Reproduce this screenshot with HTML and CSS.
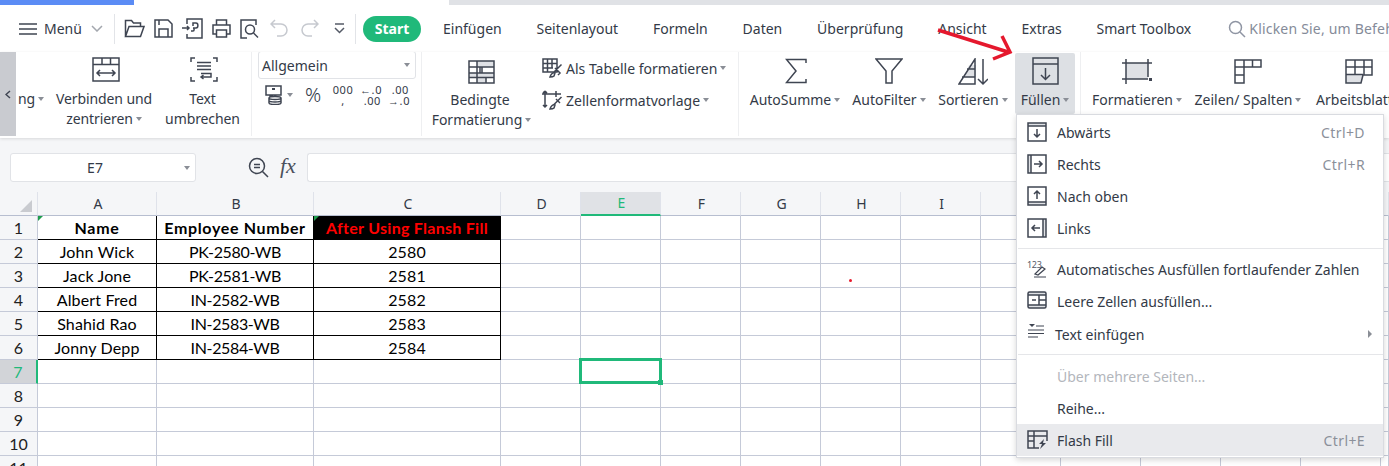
FILE: index.html
```html
<!DOCTYPE html>
<html lang="de">
<head>
<meta charset="utf-8">
<title>Füllen</title>
<link rel="stylesheet" href="styles.css">
</head>
<body>
<div class="stripe"><span class="stripe-blue"></span><span class="stripe-white"></span><span class="stripe-gray"></span></div>

<div class="tabbar">
  <svg class="i hamb" width="18" height="12" viewBox="0 0 18 12"><path d="M0 1h18M0 6h18M0 11h18"/></svg>
  <span class="menu-label">Menü</span>
  <svg class="i chev" width="12" height="7" viewBox="0 0 12 7"><path d="M1 1l5 5 5-5"/></svg>
  <span class="vsep vsep-a"></span>
  <div class="qa">
    <svg class="i" width="21" height="19" viewBox="0 0 21 19"><path d="M1.500 17.500V1.500h6l2 2.500h7v3.500M1.500 17.500h15l3.500-10H5z"/></svg>
    <svg class="i" width="19" height="19" viewBox="0 0 19 19"><path d="M1 1h13l4 4v13H1zM5 18v-8h9v8M5 1v5"/></svg>
    <svg class="i" width="21" height="21" viewBox="0 0 21 21"><path d="M5 6V1h15v19H5v-4M0 10h7M5 8l2 2-2 2M9 13h2c1.500 0 1.500-3 0-3h3c2.500 0 2.500-5 0-5h-3v3"/></svg>
    <svg class="i" width="19" height="19" viewBox="0 0 19 19"><path d="M4.500 6V1h10v5M4.500 15H1V6h17v9h-3.500M4.500 11h10v7h-10z"/></svg>
    <svg class="i" width="19" height="20" viewBox="0 0 19 20"><path d="M16 4V1H1v18h6M16 4v2"/><circle cx="10" cy="10.500" r="4.500"/><path d="M13.500 14l4.500 4.500"/></svg>
    <svg class="i off" width="18" height="19" viewBox="0 0 18 19"><path d="M5 1L1 5l4 4M1 5h10a6 6 0 0 1 0 12H7"/></svg>
    <svg class="i off" width="18" height="19" viewBox="0 0 18 19"><path d="M13 1l4 4-4 4M17 5H7a6 6 0 0 0 0 12h4"/></svg>
    <svg class="i more" width="11" height="11" viewBox="0 0 11 11"><path d="M1 1h9M1 5l4.500 4.500L10 5"/></svg>
  </div>
  <span class="vsep"></span>
  <span class="start">Start</span>
  <nav class="tabs">
    <span>Einfügen</span><span>Seitenlayout</span><span>Formeln</span><span>Daten</span><span>Überprüfung</span><span>Ansicht</span><span>Extras</span><span>Smart Toolbox</span>
  </nav>
  <div class="search">
    <svg class="i search-i" width="18" height="18" viewBox="0 0 18 18"><circle cx="7.500" cy="7.500" r="6"/><path d="M12 12l5 5"/></svg>
    <span>Klicken Sie, um Befehle zu suchen</span>
  </div>
</div>

<div class="ribbon">
  <div class="scroll-btn"><svg class="i" width="6" height="9" viewBox="0 0 6 9"><path d="M5 1L1 4.500 5 8"/></svg></div>

  <div class="group g1">
    <div class="tool t-ng"><div class="ico"></div><div class="lbl">ng<i class="caret"></i></div></div>
    <div class="tool t-verb">
      <div class="ico"><svg class="i" width="28" height="25" viewBox="0 0 28 25"><path d="M1 1h26v23H1zM1 7.500h26M10 1v6.500M18.500 1v6.500M5 16h18M8 13l-3 3 3 3M20 13l3 3-3 3"/></svg></div>
      <div class="lbl">Verbinden und</div><div class="lbl">zentrieren<i class="caret"></i></div>
    </div>
    <div class="tool t-text">
      <div class="ico"><svg class="i" width="28" height="25" viewBox="0 0 28 25"><path d="M5 1H1v4M23 1h4v4M1 20v4h4M27 20v4h-4M7 5.500h14M7 9h14M7 12.500h14M11 16.500h10v3.500H11M13.500 18l-2.500 2 2.500 2"/></svg></div>
      <div class="lbl">Text</div><div class="lbl">umbrechen</div>
    </div>
  </div>

  <div class="group g2">
    <div class="select"><span>Allgemein</span><i class="caret"></i></div>
    <div class="numrow">
      <svg class="i coins" width="19" height="20" viewBox="0 0 19 20"><path d="M1 1h15v9H1zM5 10v1h3M4 13c0-2 12-2 12 0s-12 2-12 0zM4 13v5c0 2 12 2 12 0v-5M4 15.500c0 2 12 2 12 0"/><path class="fill" d="M7 3h3v2H7z"/></svg>
      <i class="caret"></i>
      <span class="pct">%</span>
      <span class="stack s-000"><b>000</b><b>,</b></span>
      <span class="stack s-dec"><b>←.0</b><b>.00</b></span>
      <span class="stack s-inc"><b>.00</b><b>→.0</b></span>
    </div>
  </div>

  <div class="group g3">
    <div class="tool t-bed">
      <div class="ico ico-low"><svg class="i" width="27" height="24" viewBox="0 0 27 24"><path class="shade" d="M9 1h17v6H9zM14 13h12v4H14zM1 13h13v4H1zM9 17h9v6H9z"/><path d="M1 1h25v22H1zM1 7h25M1 13h25M1 17.500h25M9 1v22M14 7v6M18 17.500V23M12 7v6"/></svg></div>
      <div class="lbl">Bedingte</div><div class="lbl">Formatierung<i class="caret"></i></div>
    </div>
    <div class="stylecol">
      <div class="stylerow sr1">
        <svg class="i" width="21" height="20" viewBox="0 0 21 20"><path d="M1 1h14v13H1zM1 5.500h14M1 10h10M5.500 1v13M10 1v9M19.500 6.500l-8 8M13 10l5 5-2 2"/><path d="M8 19c1-3 3-5 5-4l-1 3c-1 1-3 1-4 1z"/></svg>
        <span>Als Tabelle formatieren</span><i class="caret"></i>
      </div>
      <div class="stylerow sr2">
        <svg class="i" width="21" height="20" viewBox="0 0 21 20"><path d="M3 1v16M0 4h19M14 1v6M3 1l-2 2M3 1l2 2M1 15l2 2 2-2M19.500 7l-8 8"/><path d="M8 19c1-3 3-5 5-4l-1 3c-1 1-3 1-4 1z"/><path d="M14 9l4 4"/></svg>
        <span>Zellenformatvorlage</span><i class="caret"></i>
      </div>
    </div>
  </div>

  <div class="group g4">
    <div class="tool t-sum">
      <div class="ico ico-low"><svg class="i" width="22" height="26" viewBox="0 0 22 26"><path d="M21 5V1.500H1.500L11 13 1.500 24.500H21V21"/></svg></div>
      <div class="lbl">AutoSumme<i class="caret"></i></div>
    </div>
    <div class="tool t-filter">
      <div class="ico ico-low"><svg class="i" width="28" height="26" viewBox="0 0 28 26"><path d="M1 1h26L17 13v12h-6V13z"/></svg></div>
      <div class="lbl">AutoFilter<i class="caret"></i></div>
    </div>
    <div class="tool t-sort">
      <div class="ico ico-low"><svg class="i" width="30" height="28" viewBox="0 0 30 28"><path class="shade" d="M11 7h7v12H7z"/><path d="M1 26L17 1v25zM9 11h8M4 19h13M25 1v25M20 21l5 5 5-5"/></svg></div>
      <div class="lbl">Sortieren<i class="caret"></i></div>
    </div>
    <div class="tool t-fill">
      <div class="ico"><svg class="i" width="27" height="28" viewBox="0 0 27 28"><path class="shade" d="M1 1h25v6H1z"/><path d="M1 1h25v26H1zM1 7h25M13.500 11v11M9 18l4.500 4.500L18 18"/></svg></div>
      <div class="lbl">Füllen<i class="caret"></i></div>
    </div>
  </div>

  <div class="group g5">
    <div class="tool t-fmt">
      <div class="ico ico-low"><svg class="i" width="30" height="25" viewBox="0 0 30 25"><path class="shade" d="M4 4h22v16H4z"/><path d="M0 4h30M0 20h26M4 0v25M26 0v18"/><path class="fill" d="M27 19h3v3h-3z"/></svg></div>
      <div class="lbl">Formatieren<i class="caret"></i></div>
    </div>
    <div class="tool t-rows">
      <div class="ico ico-low"><svg class="i" width="28" height="25" viewBox="0 0 28 25"><path d="M1 1h26v7H1zM1 8v16h9V1M1 16h9M18.500 1v7"/></svg></div>
      <div class="lbl">Zeilen/ Spalten<i class="caret"></i></div>
    </div>
    <div class="tool t-sheet">
      <div class="ico ico-low"><svg class="i" width="28" height="25" viewBox="0 0 28 25"><path class="shade" d="M1 15.500h17l-2 8.500H1z"/><path d="M1 15.500V1h26v15h-9l-2 8H1v-8.500h17M1 8h26M10 1v14.500M19 1v15"/></svg></div>
      <div class="lbl">Arbeitsblatt<i class="caret"></i></div>
    </div>
  </div>
</div>

<div class="formula">
  <div class="namebox"><span>E7</span><i class="caret"></i></div>
  <svg class="i zoomi" width="21" height="21" viewBox="0 0 21 21"><circle cx="9" cy="9" r="7.500"/><path d="M14.500 14.500l5.500 5.500M6 7.500h6M6 10.500h6"/></svg>
  <span class="fx">fx</span>
  <div class="fbox"></div>
</div>

<table class="sheet">
  <colgroup><col class="c-h"><col class="c-a"><col class="c-b"><col class="c-c"><col class="c-n"><col class="c-n"><col class="c-n"><col class="c-n"><col class="c-n"><col class="c-n"><col class="c-n"><col class="c-n"><col class="c-n"><col class="c-n"><col class="c-n"><col class="c-e"></colgroup>
  <tr class="head"><th class="corner"><span class="tri"></span></th><th>A</th><th>B</th><th>C</th><th>D</th><th class="col-sel">E</th><th>F</th><th>G</th><th>H</th><th>I</th><th></th><th></th><th></th><th></th><th></th><th></th></tr>
  <tr><th>1</th><td class="bx bold wide mark">Name</td><td class="bx bold wide">Employee Number</td><td class="bx bold inv mark">After Using Flansh Fill</td><td></td><td></td><td></td><td></td><td></td><td></td><td></td><td></td><td></td><td></td><td></td><td></td></tr>
  <tr><th>2</th><td class="bx">John Wick</td><td class="bx code">PK-2580-WB</td><td class="bx">2580</td><td></td><td></td><td></td><td></td><td></td><td></td><td></td><td></td><td></td><td></td><td></td><td></td></tr>
  <tr><th>3</th><td class="bx">Jack Jone</td><td class="bx code">PK-2581-WB</td><td class="bx">2581</td><td></td><td></td><td></td><td></td><td></td><td></td><td></td><td></td><td></td><td></td><td></td><td></td></tr>
  <tr><th>4</th><td class="bx">Albert Fred</td><td class="bx code">IN-2582-WB</td><td class="bx">2582</td><td></td><td></td><td></td><td></td><td></td><td></td><td></td><td></td><td></td><td></td><td></td><td></td></tr>
  <tr><th>5</th><td class="bx">Shahid Rao</td><td class="bx code">IN-2583-WB</td><td class="bx">2583</td><td></td><td></td><td></td><td></td><td></td><td></td><td></td><td></td><td></td><td></td><td></td><td></td></tr>
  <tr><th>6</th><td class="bx">Jonny Depp</td><td class="bx code">IN-2584-WB</td><td class="bx">2584</td><td></td><td></td><td></td><td></td><td></td><td></td><td></td><td></td><td></td><td></td><td></td><td></td></tr>
  <tr><th class="row-sel">7</th><td></td><td></td><td></td><td></td><td><span class="selbox"><span class="handle"></span></span></td><td></td><td></td><td></td><td></td><td></td><td></td><td></td><td></td><td></td><td></td></tr>
  <tr><th>8</th><td></td><td></td><td></td><td></td><td></td><td></td><td></td><td></td><td></td><td></td><td></td><td></td><td></td><td></td><td></td></tr>
  <tr><th>9</th><td></td><td></td><td></td><td></td><td></td><td></td><td></td><td></td><td></td><td></td><td></td><td></td><td></td><td></td><td></td></tr>
  <tr><th>10</th><td></td><td></td><td></td><td></td><td></td><td></td><td></td><td></td><td></td><td></td><td></td><td></td><td></td><td></td><td></td></tr>
  <tr><th>11</th><td></td><td></td><td></td><td></td><td></td><td></td><td></td><td></td><td></td><td></td><td></td><td></td><td></td><td></td><td></td></tr>
</table>

<span class="reddot"></span>

<svg class="arrow" width="80" height="40" viewBox="0 0 80 40"><path d="M8 5l70 22M72 11l8 16-17 7"/></svg>

<div class="menu">
  <div class="mi"><svg class="i" width="20" height="20" viewBox="0 0 20 20"><path class="shade" d="M1 1h18v3H1z"/><path d="M1 1h18v18H1zM1 4h18M10 7v8M7 12l3 3 3-3"/></svg><span>Abwärts</span><em>Ctrl+D</em></div>
  <div class="mi"><svg class="i" width="20" height="20" viewBox="0 0 20 20"><path class="shade" d="M1 1h3v18H1z"/><path d="M1 1h18v18H1zM4 1v18M7 10h8M12 7l3 3-3 3"/></svg><span>Rechts</span><em>Ctrl+R</em></div>
  <div class="mi"><svg class="i" width="20" height="20" viewBox="0 0 20 20"><path class="shade" d="M1 16h18v3H1z"/><path d="M1 1h18v18H1zM1 16h18M10 13V5M7 8l3-3 3 3"/></svg><span>Nach oben</span></div>
  <div class="mi"><svg class="i" width="20" height="20" viewBox="0 0 20 20"><path class="shade" d="M16 1h3v18h-3z"/><path d="M1 1h18v18H1zM16 1v18M13 10H5M8 7l-3 3 3 3"/></svg><span>Links</span></div>
  <div class="msep sep1"></div>
  <div class="mi"><svg class="i thin" width="20" height="20" viewBox="0 0 20 20"><text class="num" x="0" y="9">123</text><path d="M8 15l7-7 3 2-7 6zM7 18h12"/></svg><span>Automatisches Ausfüllen fortlaufender Zahlen</span></div>
  <div class="mi"><svg class="i" width="20" height="18" viewBox="0 0 20 18"><path class="shade" d="M1 1h18v3H1zM1 14h18v3H1z"/><path d="M1 2.500q0-1.500 1.500-1.500h15q1.500 0 1.500 1.500v13q0 1.500-1.500 1.500h-15Q1 17 1 15.500zM1 4h18M1 14h18M12 4v10M12 9h7M5 9h4"/></svg><span>Leere Zellen ausfüllen...</span></div>
  <div class="mi mi-tall"><svg class="i thin" width="18" height="16" viewBox="0 0 18 16"><path class="fill" d="M2 1h6L5 4z"/><path d="M9 3h8M1 7h16M1 10.500h16M1 14h10"/></svg><span>Text einfügen</span><i class="tri-r"></i></div>
  <div class="msep sep2"></div>
  <div class="mi dis"><span>Über mehrere Seiten...</span></div>
  <div class="mi"><span>Reihe...</span></div>
  <div class="mi hot"><svg class="i" width="21" height="20" viewBox="0 0 21 20"><path d="M12 18H1V1h19v10M1 6h19M7 1v17M1 11h6"/><path class="fill" d="M17 9l-5 5h3l-2 5 6-6h-3z"/></svg><span>Flash Fill</span><em>Ctrl+E</em></div>
</div>
</body>
</html>
```

FILE: styles.css
```css
* { box-sizing: border-box; }
html, body { margin: 0; height: 466px; overflow: hidden; }
body {
  position: relative;
  width: 1389px;
  background: #f5f6f8;
  font-family: "Noto Sans", sans-serif;
  font-size: 14px;
  color: #333a47;
}
.i { display: block; fill: none; stroke: #3f4552; stroke-width: 1.5; flex: none; }
.i .shade { fill: #dfe1e5; stroke: none; }
.i .fill { fill: #3f4552; stroke: none; }
.i.off { stroke: #c6c9cf; }
.i.thin { stroke-width: 1.2; }

.stripe { display: flex; height: 5px; background: #fff; }
.stripe-blue { width: 134px; background: #5b8cf5; }
.stripe-white { width: 315px; }
.stripe-gray { flex: 1; background: #e0e2e6; }

.tabbar { display: flex; align-items: center; height: 47px; background: #fff; white-space: nowrap; overflow: hidden; }
.hamb { margin-left: 19px; }
.menu-label { margin-left: 7px; width: 38px; flex: none; }
.chev { margin-left: 9px; stroke: #a3a7ae; }
.vsep { width: 1px; height: 30px; background: #e2e4e8; flex: none; }
.vsep-a { margin-left: 11px; }
.qa { display: flex; align-items: center; gap: 9px; margin-left: 9px; width: 231px; flex: none; }
.qa svg:nth-child(6) { margin-left: 2px; }
.qa svg:nth-child(7) { margin-left: 4px; }
.qa svg:nth-child(8) { margin-left: 6px; }
.more { stroke: #555b67; }
.start {
  margin-left: 7px; width: 58px; height: 26px; border-radius: 13px; flex: none;
  background: #20b97a; color: #fff; font-weight: 700; text-align: center; line-height: 26px;
}
.tabs { display: flex; gap: 34.85px; margin-left: 22px; flex: none; }
.search { display: flex; align-items: center; margin-left: 37px; color: #858b99; flex: none; letter-spacing: .2px; }
.search-i { stroke: #8f95a3; margin-right: 3px; }

.ribbon {
  display: flex; height: 86px; background: #fff; overflow: hidden;
  box-shadow: 0 1px 3px rgba(0,0,0,.12); position: relative;
}
.scroll-btn { width: 16px; height: 84px; background: #c9cbd0; display: flex; align-items: center; justify-content: center; flex: none; }
.group { display: flex; align-items: flex-start; height: 84px; border-right: 1px solid #eeeff1; flex: none; }
.g1 { width: 236px; }
.g2 { width: 170px; display: block; padding-left: 6px; }
.g3 { width: 317px; }
.g4 { width: 342px; padding-left: 4px; }
.g5 { border: 0; padding-left: 4px; }

.tool { flex: none; display: flex; flex-direction: column; align-items: center; }
.ico { height: 38px; flex: none; padding-top: 5px; }
.ico-low { padding-top: 7px; }
.g4 .ico-low { padding-top: 6px; }
.t-bed .ico-low { padding-top: 8px; margin-left: 2px; }
.t-bed .lbl + .lbl { margin-left: 3px; }
.lbl { line-height: 20px; white-space: nowrap; display: flex; align-items: center; flex: none; }
.g1 .ico { height: 37px; }
.g1 .lbl { letter-spacing: -.1px; }
.t-ng { width: 38px; align-items: flex-start; padding-left: 2px; }
.t-verb { width: 100px; }
.t-verb .ico { margin-left: 4px; }
.t-text { width: 97px; }
.t-text .ico { margin-left: 2px; }
.t-bed { width: 116px; }
.t-sum { width: 104px; }
.t-sum .ico { margin-left: 2px; }
.t-filter { width: 84px; }
.t-sort { width: 84px; }
.t-fill { width: 60px; height: 61px; margin-top: 1px; background: #dde0e4; border-radius: 2px; }
.t-fill .ico { height: 37px; padding-top: 4px; }
.t-fmt { width: 104px; }
.t-rows { width: 118px; }
.t-sheet { width: 104px; }

.caret {
  display: inline-block; flex: none; width: 0; height: 0; margin-left: 3px;
  border-left: 3.5px solid transparent; border-right: 3.5px solid transparent; border-top: 4px solid #8a8e96;
}

.select {
  display: flex; align-items: center; justify-content: space-between; width: 158px; height: 28px;
  margin-top: -1px; padding: 0 3px; border: 1px solid #e1e3e7; border-radius: 3px; background: #fff;
}
.select .caret { margin-right: 2px; }
.numrow { display: flex; align-items: center; margin-top: 6px; height: 20px; padding-left: 7px; }
.pct { font-size: 20px; margin-left: 12px; line-height: 20px; width: 18px; font-weight: 300; }
.stack { display: flex; flex-direction: column; font-size: 11px; line-height: 11px; letter-spacing: .6px; text-align: right; }
.stack b { font-weight: 400; }
.s-000 { margin-left: 9px; width: 22px; align-items: center; }
.s-dec { margin-left: 6px; width: 21px; }
.s-inc { margin-left: 7px; width: 21px; }

.stylecol { padding: 6px 0 0 4px; }
.stylerow { display: flex; align-items: center; height: 20px; white-space: nowrap; }
.stylerow span { margin-left: 3px; }
.sr2 { margin-top: 12px; }

.formula { display: flex; align-items: flex-start; height: 54px; padding: 15px 0 0 10px; background: #f5f6f8; }
.namebox {
  position: relative; width: 186px; height: 29px; background: #fff; border: 1px solid #e1e3e7; border-radius: 3px;
  display: flex; align-items: center; justify-content: center; padding-right: 16px; flex: none;
}
.namebox .caret { position: absolute; right: 5px; top: 12px; }
.zoomi { margin: 4px 0 0 52px; }
.fx { font-family: "Liberation Serif", serif; font-style: italic; font-size: 22px; line-height: 26px; margin-left: 11px; width: 27px; color: #4a505c; flex: none; }
.fbox { flex: 1; height: 29px; background: #fff; border: 1px solid #e1e3e7; border-radius: 3px 0 0 3px; border-right: 0; }

.sheet { table-layout: fixed; border-collapse: separate; border-spacing: 0; width: 1389px; background: #fff; font-family: Lato, sans-serif; font-size: 16px; color: #000; }
.c-h { width: 38px; } .c-a { width: 119px; } .c-b { width: 157px; } .c-c { width: 187px; } .c-n { width: 80px; } .c-e { width: 8px; }
.sheet tr { height: 24px; }
.sheet th, .sheet td { padding: 0; height: 24px; text-align: center; font-weight: 400; border-right: 1px solid #c5cad8; border-bottom: 1px solid #c5cad8; white-space: nowrap; line-height: 22px; position: relative; }
.sheet th { background: #f5f6f8; color: #222; }
.sheet .head th { border-bottom-color: #b7bed0; border-right-color: #dfe2ea; font-size: 14px; font-family: "Noto Sans", sans-serif; color: #333a47; padding-left: 2px; }
.corner { position: relative; }
.tri { position: absolute; right: 5px; bottom: 3px; width: 0; height: 0; border-left: 12px solid transparent; border-bottom: 12px solid #c9cbd0; }
.sheet .bx { border-right-color: #000; border-bottom-color: #000; letter-spacing: .15px; }
.sheet .bold { font-weight: 700; }
.sheet .wide { letter-spacing: .65px; }
.sheet .inv { background: #000; color: #f00; letter-spacing: .28px; }
.sheet .code { letter-spacing: -.35px; }
.mark::before { content: ""; position: absolute; left: 0; top: 0; border-top: 5px solid #1f9d4d; border-right: 5px solid transparent; }
.sheet .head .col-sel { background: #e0e2e6; color: #20b97a; border-bottom: 2px solid #20b97a; }
.sheet .row-sel { background: #d2d4d8; color: #20b97a; border-right: 2px solid #20b97a; }
.selbox { position: absolute; left: -2px; top: -2px; width: 83px; height: 26px; border: 3px solid #20b97a; z-index: 1; }
.handle { position: absolute; right: -4px; bottom: -4px; width: 5px; height: 5px; background: #20b97a; }

.reddot { position: absolute; left: 849px; top: 279px; width: 3px; height: 3px; border-radius: 50%; background: #e8192c; }
.arrow { position: absolute; left: 930px; top: 25px; fill: none; stroke: #e5182d; stroke-width: 3.5; overflow: visible; }

.menu {
  position: absolute; left: 1016px; top: 114px; width: 368px; height: 344px; padding-top: 1px;
  background: #fff; border: 1px solid #d9dbe0; box-shadow: 0 2px 6px rgba(0,0,0,.16);
}
.mi { display: flex; align-items: center; height: 32px; padding-left: 40px; white-space: nowrap; position: relative; }
.mi .i { position: absolute; left: 10px; top: 6px; }
.mi em { margin-left: auto; margin-right: 18px; font-style: normal; color: #8b909a; letter-spacing: .4px; }
.mi-tall { height: 33px; padding-left: 38px; padding-top: 2px; }
.msep { height: 1px; background: #e5e6e9; margin: 4px 0 4px 1px; }
.sep2 { margin-top: 4px; margin-bottom: 5px; }
.dis { color: #b3b6bc; }
.hot { background: #e9eaed; }
.num { font-family: "Noto Sans", sans-serif; font-size: 9px; fill: #555b67; stroke: none; letter-spacing: -.3px; }
.tri-r { position: absolute; right: 11px; top: 13px; border-left: 4px solid #8a8e96; border-top: 4px solid transparent; border-bottom: 4px solid transparent; }
```
